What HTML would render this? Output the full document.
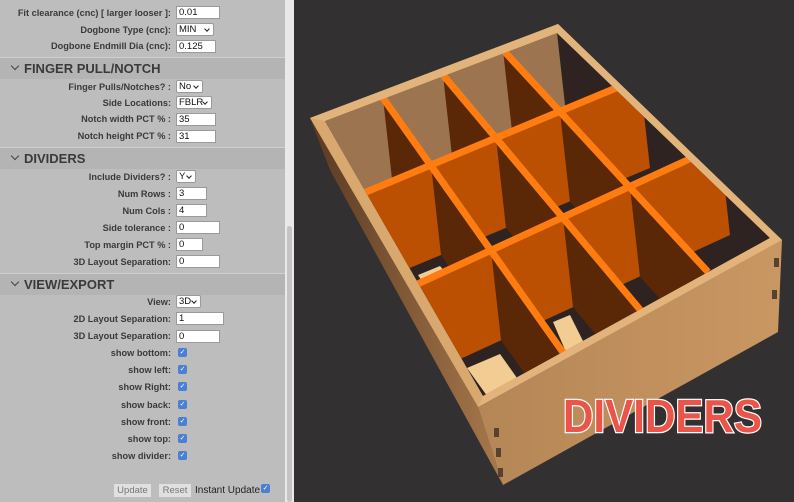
<!DOCTYPE html>
<html><head><style>
*{margin:0;padding:0;box-sizing:border-box}
body{width:794px;height:502px;overflow:hidden;background:#323031;font-family:"Liberation Sans",sans-serif;position:relative}
#panel{position:absolute;left:0;top:0;width:285px;height:502px;background:#bdbdbd}
#sb{position:absolute;left:285px;top:0;width:9px;height:502px;background:#e9e9e9}
#thumb{position:absolute;left:287px;top:226px;width:5px;height:276px;background:#c4c4c4;border-radius:3px}
.l{position:absolute;right:114px;font-size:9.2px;font-weight:bold;color:#3a3a3a;white-space:nowrap;line-height:12px}
.i{position:absolute;left:176px;height:13px;background:#fff;border:1px solid #9a9a9a;font-size:9.5px;line-height:11px;padding-left:2px;color:#111}
.s{position:absolute;left:176px;height:13px;background:#fff;border:1px solid #9a9a9a;border-radius:2px;font-size:9.5px;line-height:11px;padding-left:2px;color:#111}
.s:after{content:"";position:absolute;right:4px;top:3px;width:3px;height:3px;border-right:1.3px solid #222;border-bottom:1.3px solid #222;transform:rotate(45deg)}
.h{position:absolute;left:0;width:285px;height:22px;border-top:1px solid #cfcfcf;background:#b4b4b4;font-size:13px;font-weight:bold;color:#3a3a3a;line-height:21px;padding-left:24px}
.h:before{content:"";position:absolute;left:12px;top:5px;width:5px;height:5px;border-right:1.5px solid #444;border-bottom:1.5px solid #444;transform:rotate(45deg)}
.c{position:absolute;left:178px;width:9px;height:9px;background:#4a7fd6;border-radius:2px;color:#fff;font-size:7px;line-height:9px;text-align:center}
.b{position:absolute;top:484px;height:13px;background:#e0e0e0;color:#777;font-size:9.5px;line-height:13px;text-align:center}
</style></head><body>
<div id="panel">
<div class="l" style="top:7px">Fit clearance (cnc) [ larger looser ]:</div><div class="i" style="top:6px;width:44px">0.01</div>
<div class="l" style="top:24px">Dogbone Type (cnc):</div><div class="s" style="top:23px;width:38px">MIN</div>
<div class="l" style="top:40px">Dogbone Endmill Dia (cnc):</div><div class="i" style="top:40px;width:40px">0.125</div>
<div class="h" style="top:57px">FINGER PULL/NOTCH</div>
<div class="l" style="top:81px">Finger Pulls/Notches? :</div><div class="s" style="top:80px;width:27px">No</div>
<div class="l" style="top:97px">Side Locations:</div><div class="s" style="top:96px;width:36px">FBLR</div>
<div class="l" style="top:113px">Notch width PCT % :</div><div class="i" style="top:113px;width:40px">35</div>
<div class="l" style="top:130px">Notch height PCT % :</div><div class="i" style="top:130px;width:40px">31</div>
<div class="h" style="top:147px">DIVIDERS</div>
<div class="l" style="top:171px">Include Dividers? :</div><div class="s" style="top:170px;width:20px">Y</div>
<div class="l" style="top:188px">Num Rows :</div><div class="i" style="top:187px;width:31px">3</div>
<div class="l" style="top:205px">Num Cols :</div><div class="i" style="top:204px;width:31px">4</div>
<div class="l" style="top:222px">Side tolerance :</div><div class="i" style="top:221px;width:44px">0</div>
<div class="l" style="top:239px">Top margin PCT % :</div><div class="i" style="top:238px;width:27px">0</div>
<div class="l" style="top:256px">3D Layout Separation:</div><div class="i" style="top:255px;width:44px">0</div>
<div class="h" style="top:273px">VIEW/EXPORT</div>
<div class="l" style="top:296px">View:</div><div class="s" style="top:295px;width:25px">3D</div>
<div class="l" style="top:313px">2D Layout Separation:</div><div class="i" style="top:312px;width:48px">1</div>
<div class="l" style="top:330px">3D Layout Separation:</div><div class="i" style="top:330px;width:44px">0</div>
<div class="l" style="top:347px">show bottom:</div><div class="c" style="top:348px">✓</div>
<div class="l" style="top:364px">show left:</div><div class="c" style="top:365px">✓</div>
<div class="l" style="top:381px">show Right:</div><div class="c" style="top:382px">✓</div>
<div class="l" style="top:399px">show back:</div><div class="c" style="top:400px">✓</div>
<div class="l" style="top:416px">show front:</div><div class="c" style="top:417px">✓</div>
<div class="l" style="top:433px">show top:</div><div class="c" style="top:434px">✓</div>
<div class="l" style="top:450px">show divider:</div><div class="c" style="top:451px">✓</div>
<div class="b" style="left:114px;width:37px">Update</div>
<div class="b" style="left:159px;width:32px">Reset</div>
<div style="position:absolute;left:195px;top:484px;font-size:10px;color:#222;line-height:13px">Instant Update</div>
<div class="c" style="left:261px;top:484px">✓</div>
</div>
<div id="sb"></div><div id="thumb"></div>
<svg style="position:absolute;left:0;top:0" width="794" height="502">
<defs>
<linearGradient id="lf" x1="0" y1="0" x2="1" y2="0"><stop offset="0" stop-color="#5a3a22"/><stop offset="1" stop-color="#a8794c"/></linearGradient>
<linearGradient id="ff" x1="0" y1="0" x2="1" y2="0"><stop offset="0" stop-color="#b58656"/><stop offset="1" stop-color="#c99762"/></linearGradient>
<clipPath id="op"><polygon points="325,121 557,33 770,238 483,396"/></clipPath>
</defs>
<polygon points="310,118 478,407 503,485 330,170" fill="url(#lf)"/>
<polygon points="478,407 782,240 778,332 503,485" fill="url(#ff)"/>
<polygon points="310,118 558,24 782,240 478,407" fill="#d8a86f"/>
<polygon points="325,121 557,33 770,238 483,396" fill="#2e2320"/>
<g clip-path="url(#op)">
<polygon points="325,121 557,33 567,123 335,211" fill="#9c7550"/>
<g fill="#5a2806">
<polygon points="383,98 431,165 441,255 393,188"/>
<polygon points="443,75 496,138 506,228 453,165"/>
<polygon points="503,50 560,112 570,202 513,140"/>
</g>
<polygon points="330,207 640,78 650,168 340,297" fill="#bb4f02"/>
<g fill="#5a2806">
<polygon points="431,165 491,250 501,340 441,255"/>
<polygon points="496,138 563,217 573,307 506,228"/>
<polygon points="560,112 630,187 640,277 570,202"/>
</g>
<polygon points="385,299 720,145 730,235 395,389" fill="#bb4f02"/>
<g fill="#5a2806">
<polygon points="491,250 563,352 573,442 501,340"/>
<polygon points="563,217 640,310 650,400 573,307"/>
<polygon points="630,187 708,272 718,362 640,277"/>
</g>
<polygon points="467,368 500,354 522,385 490,400" fill="#f3cc94"/>
<polygon points="553,322 570,315 585,345 566,352" fill="#f3cc94"/>
<polygon points="418,275 440,266 446,273 423,283" fill="#f3cc94"/>
<g stroke="#ff7d10" stroke-width="7" fill="none">
<line x1="330" y1="207" x2="640" y2="78"/>
<line x1="385" y1="299" x2="720" y2="145"/>
<line x1="383" y1="98" x2="567" y2="358"/>
<line x1="443" y1="75" x2="642" y2="312"/>
<line x1="503" y1="50" x2="708" y2="272"/>
</g>
</g>
<polygon points="310,118 558,24 782,240 478,407 483,396 770,238 557,33 325,121" fill="#e2b47c"/>
<g fill="#5a4030"><rect x="494" y="428" width="5" height="9"/><rect x="496" y="448" width="5" height="9"/><rect x="498" y="468" width="5" height="9"/><rect x="774" y="258" width="5" height="9"/><rect x="772" y="290" width="5" height="9"/></g>
<text x="563" y="432" font-family="Liberation Sans,sans-serif" font-weight="bold" font-size="46" fill="#ea5449" stroke="#fff" stroke-width="2.5" paint-order="stroke" textLength="199" lengthAdjust="spacingAndGlyphs">DIVIDERS</text>
</svg>
</body></html>
